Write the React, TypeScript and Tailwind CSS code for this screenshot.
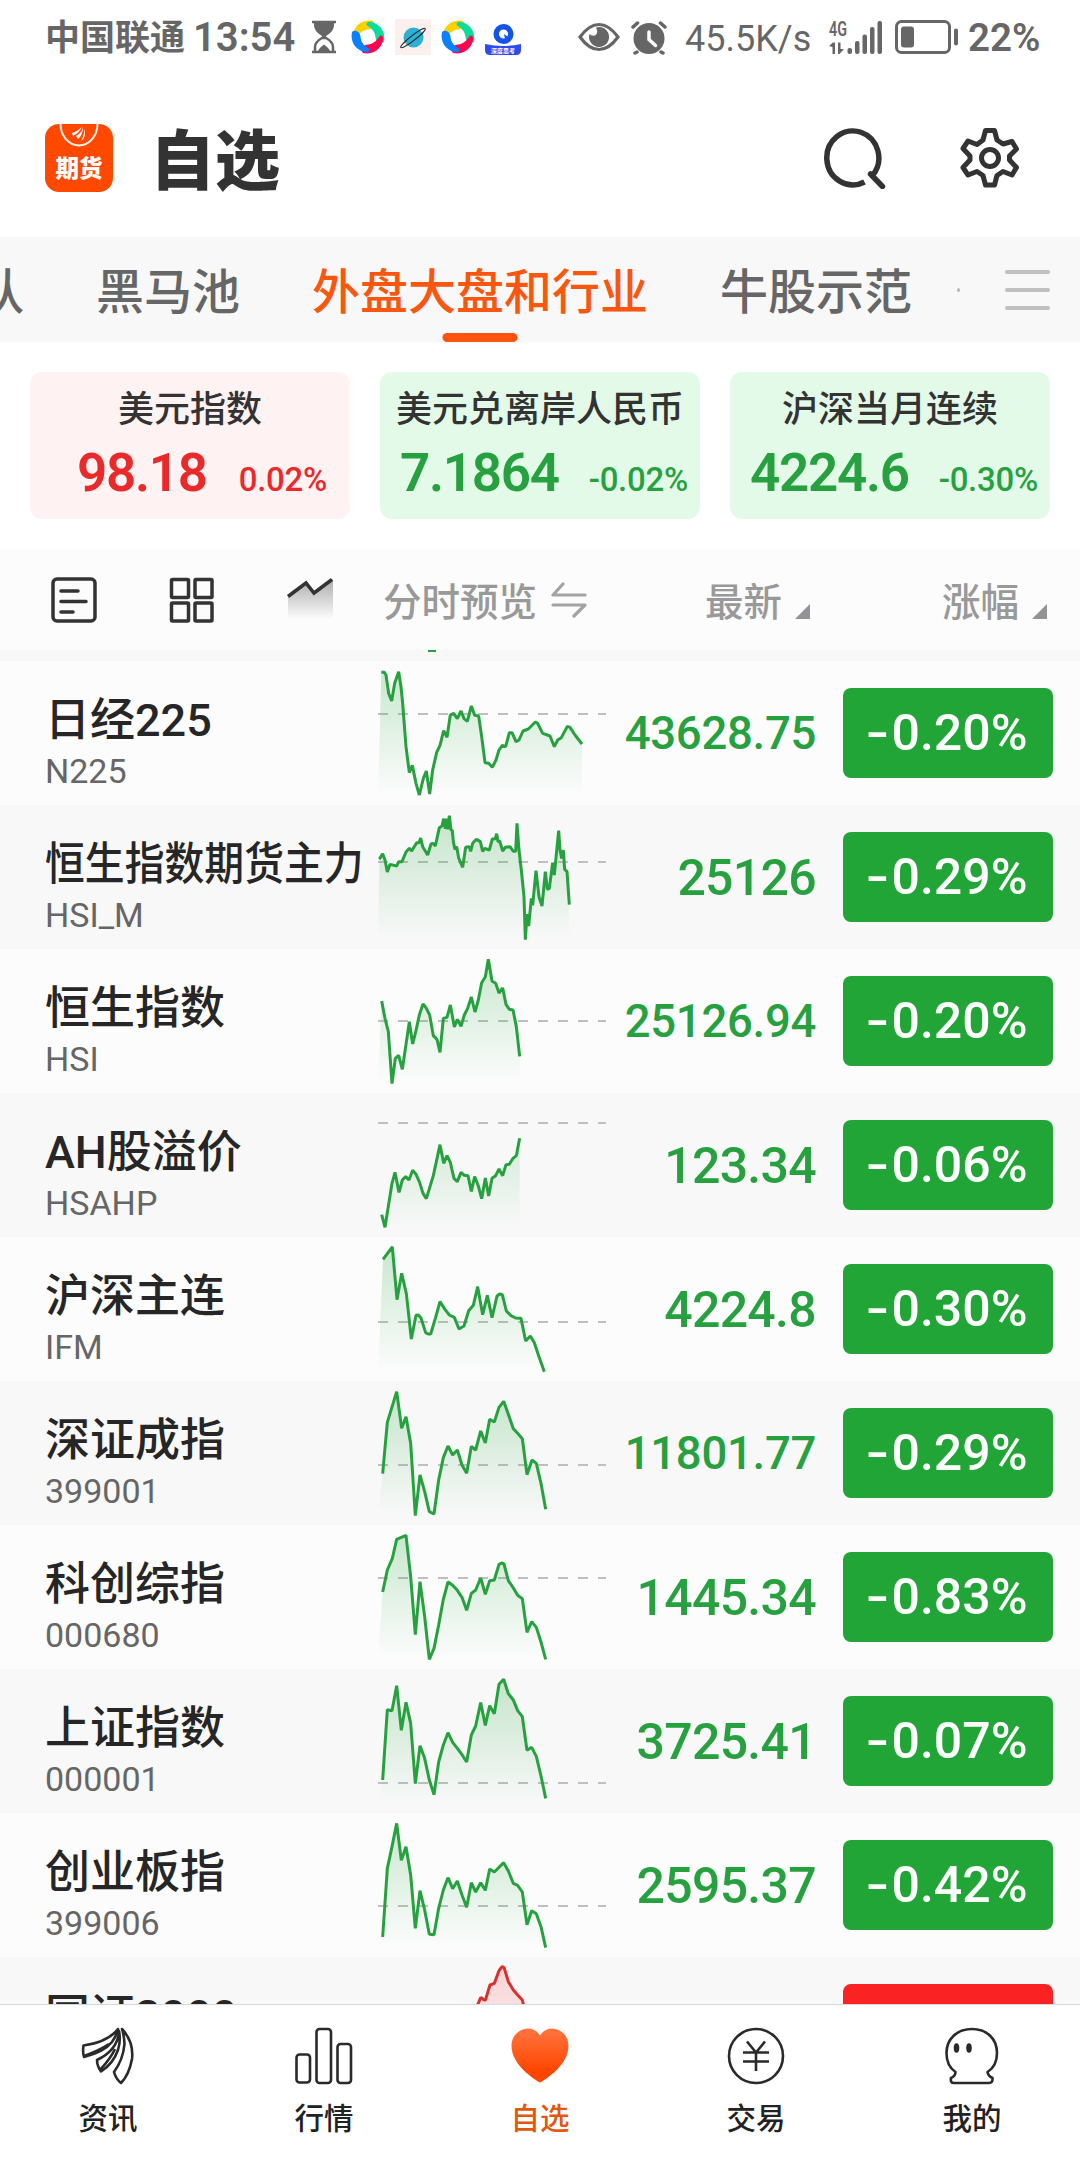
import type { ReactNode } from 'react';
import clsx from 'clsx';

interface Quote {
  name: string;
  code: string;
  price: string;
  change: string;
  base?: number;
  up?: boolean;
  points: string;
}

const CARDS = [
  { name: '美元指数', value: '98.18', pct: '0.02%', up: true },
  { name: '美元兑离岸人民币', value: '7.1864', pct: '-0.02%', up: false },
  { name: '沪深当月连续', value: '4224.6', pct: '-0.30%', up: false },
];

// Sparkline points are in thirds of a pixel, measured from the top of the row
const QUOTES: Quote[] = [
  {
    name: '日经225', code: 'N225', price: '43628.75', change: '-0.20%', base: 159,
    points: '64,34 73,34 78,42 86,97 95,120 104,67 116,32 123,77 128,127 138,257 148,335 157,313 168,367 178,402 190,352 199,330 209,399 218,327 230,274 240,253 251,209 261,229 271,162 281,157 292,173 303,150 312,173 322,181 334,135 344,163 356,165 365,227 375,305 386,307 397,319 408,297 417,267 427,253 437,257 448,215 456,215 468,242 477,237 489,210 505,204 526,183 533,187 548,217 570,225 583,257 593,237 604,230 622,196 630,199 645,222 666,249',
  },
  {
    name: '恒生指数期货主力', code: 'HSI_M', price: '25126', change: '-0.29%', base: 171,
    points: '58,163 68,146 75,165 82,201 90,178 110,183 116,170 126,170 138,141 148,130 155,138 170,113 177,113 182,99 188,125 203,150 213,117 219,115 226,123 238,68 246,63 251,41 256,71 259,41 263,73 268,32 273,75 277,77 280,110 285,133 290,125 296,159 308,187 317,127 328,125 332,139 338,115 349,103 361,110 368,139 374,130 388,135 397,102 406,101 410,86 414,110 419,108 428,138 436,127 450,125 460,139 467,139 471,55 477,135 484,195 492,275 496,404 501,327 506,363 514,280 518,301 528,197 537,275 546,303 556,200 562,253 568,250 578,173 583,210 596,77 600,135 605,160 610,135 614,193 621,200 628,299',
  },
  {
    name: '恒生指数', code: 'HSI', price: '25126.94', change: '-0.20%', base: 216,
    points: '65,156 75,208 85,248 96,404 106,328 116,319 127,361 137,293 148,218 158,285 168,245 178,198 189,165 198,176 209,198 220,260 231,271 240,310 250,208 261,205 271,168 283,234 292,211 303,232 313,198 323,178 334,144 345,189 355,153 365,101 376,83 385,31 396,96 407,103 417,132 428,117 438,166 448,181 459,183 469,233 479,322',
  },
  {
    name: 'AH股溢价', code: 'HSAHP', price: '123.34', change: '-0.06%', base: 90,
    points: '65,365 75,403 96,271 105,238 117,298 127,261 137,251 147,261 158,232 168,244 178,266 189,301 199,317 220,248 240,155 251,211 261,188 271,208 282,256 292,266 303,238 313,247 324,248 334,295 344,251 355,279 365,317 376,255 386,309 396,256 407,248 417,228 428,248 438,215 448,214 459,196 469,188 479,136',
  },
  {
    name: '沪深主连', code: 'IFM', price: '4224.8', change: '-0.30%', base: 255,
    points: '69,67 97,30 111,188 125,109 139,169 154,306 168,235 175,234 183,243 197,287 204,291 212,291 226,244 240,194 255,217 268,234 283,241 297,276 312,267 326,221 340,205 353,149 368,233 382,175 396,242 411,177 419,171 427,173 439,222 453,236 467,243 483,244 497,312 511,297 523,317 537,359 553,404',
  },
  {
    name: '深证成指', code: '399001', price: '11801.77', change: '-0.29%', base: 252,
    points: '68,278 82,124 110,32 125,142 138,107 152,187 166,404 180,282 194,332 208,392 222,399 236,297 250,230 264,195 278,222 292,207 306,252 320,277 334,196 347,207 362,150 376,186 389,115 403,123 417,79 431,61 445,100 460,143 473,157 487,173 501,281 516,237 529,247 543,307 557,385',
  },
  {
    name: '科创综指', code: '000680', price: '1445.34', change: '-0.83%', base: 159,
    points: '68,201 82,135 97,100 110,43 138,31 152,155 166,329 180,170 194,275 208,403 222,370 236,300 250,223 264,171 278,181 292,196 306,217 320,256 334,205 347,195 362,159 376,208 389,167 403,165 417,118 425,114 432,117 445,167 460,189 473,211 487,221 501,322 515,290 529,307 543,351 557,403',
  },
  {
    name: '上证指数', code: '000001', price: '3725.41', change: '-0.07%', base: 342,
    points: '68,333 82,122 96,125 110,50 124,184 138,100 152,163 166,344 180,230 194,268 208,333 222,377 236,279 250,228 264,191 278,220 292,238 306,257 320,279 334,198 347,171 362,101 376,169 389,110 403,134 417,46 431,31 445,74 460,93 473,125 487,143 501,244 515,235 529,262 543,321 557,388',
  },
  {
    name: '创业板指', code: '399006', price: '2595.37', change: '-0.42%', base: 279,
    points: '68,372 82,166 96,101 110,31 124,142 138,101 152,186 166,346 180,233 194,291 208,364 222,365 236,286 250,231 264,194 278,227 292,204 306,246 320,283 334,209 347,237 362,209 376,232 389,168 403,177 431,149 445,174 460,211 473,217 487,237 501,335 515,293 529,302 543,341 557,404',
  },
  {
    name: '国证2000', code: '399303', price: '', change: '', up: true,
    points: '340,170 354,141 362,122 376,130 390,84 403,79 417,41 426,29 432,31 445,74 460,99 473,114 487,129 497,170',
  },
];

function Sparkline({ points, base, up }: Pick<Quote, 'points' | 'base' | 'up'>) {
  const color = up ? '#d8302f' : '#27a13f';
  const lastX = points.split(' ').pop()!.split(',')[0];
  const startX = up ? points.split(',')[0] : '54';
  const fillId = up ? 'fill-up' : 'fill-down';

  return (
    <svg className="block h-36 w-[230px] shrink-0" viewBox="54 0 690 432">
      <defs>
        <linearGradient id={fillId} gradientUnits="userSpaceOnUse" x1="0" y1="30" x2="0" y2="400">
          <stop offset="0" stopColor={up ? '#ff2a2a' : '#22a63a'} stopOpacity={up ? 0.17 : 0.24} />
          <stop offset="1" stopColor={up ? '#ff2a2a' : '#22a63a'} stopOpacity="0" />
        </linearGradient>
      </defs>
      {base && <line x1="54" x2="738" y1={base} y2={base} stroke="#bfbfbf" strokeWidth="6" strokeDasharray="30 30" />}
      <polygon points={`${startX},405 ${points} ${lastX},405`} fill={`url(#${fillId})`} />
      <polyline points={points} fill="none" stroke={color} strokeWidth="9" strokeLinejoin="bevel" />
    </svg>
  );
}

function QuoteRow({ quote, striped }: { quote: Quote; striped: boolean }) {
  const longName = quote.name.length > 7;
  return (
    <div className={clsx('flex h-36 shrink-0', striped ? 'bg-[#f8f8f8]' : 'bg-[#fcfcfc]')}>
      <div className="w-[378px] shrink-0 pt-8 pl-[45px]">
        <p className={clsx('origin-left text-[45px] leading-[56px] font-medium whitespace-nowrap text-[#262626]', longName && 'scale-x-[0.885]')}>
          {quote.name}
        </p>
        <p className="text-[34px] leading-[45px] text-[#666]">{quote.code}</p>
      </div>
      <Sparkline points={quote.points} base={quote.base} up={quote.up} />
      <div className={clsx('-mr-px flex flex-1 items-center justify-end pt-0.5 font-medium text-[#27a13f]', quote.price.length > 7 ? 'text-[45.5px] tracking-[-0.3px]' : 'text-[50px] tracking-[-0.7px]')}>
        {quote.price}
      </div>
      <div className={clsx('mt-[27px] mr-[27px] ml-7 flex h-[90px] w-[210px] items-center justify-center rounded-lg text-[50px] font-medium text-white', quote.up ? 'bg-[#fa2222]' : 'bg-[#21a537]')}>
        {quote.change && <span className="mr-1.5 origin-center scale-x-[1.35]">{quote.change[0]}</span>}
        {quote.change.slice(1)}
      </div>
    </div>
  );
}

const PETAL = 'M3 15C5 5 14 0 23 2C26 5 23 10.500 18 10.500C12 11 9 15 6 19.500C2.500 19.500 2.500 17 3 15Z';

function PinwheelIcon() {
  return (
    <svg className="size-9" viewBox="0 0 36 36">
      <path d={PETAL} fill="#fdd000" />
      <path d={PETAL} transform="rotate(90 18 18)" fill="#0cdc9b" />
      <path d={PETAL} transform="rotate(180 18 18)" fill="#fb0551" />
      <path d={PETAL} transform="rotate(270 18 18)" fill="#0a80fb" />
    </svg>
  );
}

function StatusBar() {
  return (
    <div className="flex h-[74px] shrink-0 items-center pl-[45px] text-[#666]">
      <span className="pt-1 text-[35px] font-bold">中国联通</span>
      <span className="ml-2 w-[107px] pt-0.5 text-[40px] font-semibold">13:54</span>
      <svg className="ml-[11px] h-[34px] w-[26px]" viewBox="0 0 26 34" fill="none" stroke="#666">
        <path d="M1 2H25M1 32H25" strokeWidth="2.500" />
        <path d="M4 31V27Q4 22 11 18H15Q22 22 22 27V31" strokeWidth="2.500" />
        <path d="M3 2H23V6Q22 12 15 16V18H11V16Q4 12 3 6ZM7 31Q8 28 13 24.500Q18 28 19 31Z" fill="#666" stroke="none" />
      </svg>
      <div className="ml-[13px] flex items-center gap-[9px]">
        <PinwheelIcon />
        <svg className="size-9" viewBox="0 0 36 36">
          <rect width="36" height="36" fill="#fbf0ee" />
          <circle cx="18.500" cy="18.500" r="10" fill="#2fafd3" />
          <ellipse cx="18" cy="19" rx="15.500" ry="2.500" transform="rotate(-38 18 19)" fill="none" stroke="#222" strokeWidth="1" />
        </svg>
        <PinwheelIcon />
        <svg className="size-9" viewBox="0 0 36 36">
          <circle cx="18.500" cy="15" r="7.300" fill="none" stroke="#1552e8" strokeWidth="5.500" />
          <path d="M19 15L23 18L20 20Z" fill="#1552e8" />
          <path d="M0 25Q18 29 36 25V31Q36 36 31 36H5Q0 36 0 31Z" fill="#2e4bee" />
          <text x="18" y="34" textAnchor="middle" fontSize="6" fontWeight="700" fill="#fff">深度思考</text>
        </svg>
      </div>

      <svg className="ml-[57px] h-[30px] w-[42px]" viewBox="0 0 42 30" fill="none" stroke="#666">
        <path d="M2 15Q11 2.500 21 2.500T40 15Q31 27.500 21 27.500T2 15Z" strokeWidth="3.200" />
        <path d="M21 5A10 10 0 1 1 11.500 12Q14 14.500 17 13.500Q21 11 18 5.800Q19.500 5 21 5Z" fill="#666" stroke="none" />
      </svg>
      <svg className="ml-[11px] h-9 w-9" viewBox="0 0 36 36" fill="none" stroke="#666" strokeLinecap="round">
        <circle cx="18" cy="19.500" r="15.500" fill="#666" stroke="none" />
        <path d="M2 8L6.500 4M34 8L29.500 4M6 33L4 34M30 33L32 34" strokeWidth="3.500" />
        <path d="M18 13V20.500L24.500 26.500" stroke="#fff" strokeWidth="3.500" />
      </svg>
      <span className="ml-[18px] w-[124px] pt-1 text-[36px]">45.5K/s</span>
      <svg className="ml-5 h-[36px] w-[54px]" viewBox="0 0 54 36" fill="#666">
        <text x="0" y="16.500" fontSize="20" fontWeight="600" textLength="18" lengthAdjust="spacingAndGlyphs">4G</text>
        <path d="M0 27L4 23.500H6V35H3.500V28ZM9 23.500H11.500V30H15L10.500 35H9Z" />
        <rect x="18.500" y="29" width="4.500" height="6" rx="2" />
        <rect x="26" y="22" width="4.500" height="13" rx="2" />
        <rect x="33.500" y="15.500" width="4.500" height="19.500" rx="2" />
        <rect x="41" y="8" width="4.500" height="27" rx="2" />
        <rect x="48.500" y="2" width="4.500" height="33" rx="2" />
      </svg>
      <svg className="ml-3 h-[34px] w-[64px]" viewBox="0 0 64 34" fill="#666">
        <rect x="1.500" y="1.500" width="53" height="31" rx="5" fill="none" stroke="#666" strokeWidth="3" />
        <rect x="6" y="6.500" width="13" height="21" rx="3" />
        <rect x="59" y="8.500" width="4" height="17" rx="2" />
      </svg>
      <span className="ml-[9px] pt-0.5 text-[38.5px] font-semibold">22%</span>
    </div>
  );
}

function Header() {
  return (
    <header className="flex h-[163px] shrink-0 items-center pt-[5px] pl-[45px]">
      <svg className="size-[68px] shrink-0" viewBox="0 0 68 68">
        <rect width="68" height="68" rx="14" fill="#ff4800" />
        <path d="M15.500 0A18.500 21.500 0 0 0 52.500 0" fill="none" stroke="#fff3e8" strokeWidth="2" />
        <path d="M37 3Q33 7 27 9L28 12Q34 9 37 3ZM38 3Q37 9 31 12L33 15Q38 11 38 3ZM39 4Q40 10 36 17Q42 13 39 4Z" fill="#fff" />
        <text x="34" y="53" textAnchor="middle" fontSize="23.500" fontWeight="800" fill="#fff">期货</text>
      </svg>
      <h1 className="ml-[37px] pt-2 text-[65px] leading-none font-black text-[#333]">自选</h1>
      <svg className="ml-[544px] h-[62px] w-[62px] shrink-0" viewBox="0 0 62 62" fill="none" stroke="#333" strokeWidth="5.500">
        <path d="M40.500 55A26 27 0 1 1 48.500 48.500" />
        <path d="M46.500 47L58.500 59.500" strokeLinecap="round" />
      </svg>
      <svg className="ml-[73px] h-[62px] w-[62px] shrink-0" viewBox="959 128 62 62" fill="none" stroke="#333" strokeWidth="5" strokeLinejoin="round">
        <path d="M985.500 131.500H994.500L997 141L1003 145L1012 142.500L1016.500 150L1009.500 157V161L1016.500 168.500L1012 176L1003 172.500L997 176.500L994.500 186H985.500L983 176.500L977 172.500L968 176L963 168.500L970 161V157L963 149.500L968 142L977 145.500L983 141Z" />
        <circle cx="990" cy="159" r="8.500" />
      </svg>
    </header>
  );
}

function TabStrip() {
  return (
    <div className="flex h-[105px] shrink-0 items-center justify-between bg-[#f8f8f8] pr-[30px]">
      <div className="flex h-full w-[960px] items-center gap-[72px] overflow-hidden text-[48px] font-medium whitespace-nowrap text-[#666]">
        <span className="-ml-6 pt-[7px]">队</span>
        <span className="pt-[7px]">黑马池</span>
        <span className="relative flex h-full items-center pt-[7px] text-[#f9560f]">
          外盘大盘和行业
          <i className="absolute bottom-0 left-1/2 h-[9px] w-[75px] -translate-x-1/2 rounded-full bg-[#fc5410]" />
        </span>
        <span className="pt-[7px]">牛股示范</span>
        <i className="-ml-[27px] size-1 rounded-full bg-[#bbb]" />
      </div>
      <div className="flex w-[45px] flex-col gap-3.5">
        <i className="h-1 rounded-full bg-[#c0c0c0]" />
        <i className="h-1 rounded-full bg-[#c0c0c0]" />
        <i className="h-1 rounded-full bg-[#c0c0c0]" />
      </div>
    </div>
  );
}

function ListHeader() {
  return (
    <div className="flex h-[101px] shrink-0 items-center bg-[#fcfcfc] pl-[51px] text-[38.5px] text-[#999]">
      <svg className="h-[46px] w-[46px]" viewBox="0 0 46 46" fill="none" stroke="#333" strokeWidth="3.500" strokeLinecap="round">
        <rect x="2" y="2" width="42" height="42" rx="4" />
        <path d="M10 14H27M10 24.500H35M10 35H22" />
      </svg>
      <svg className="ml-[72px] h-[46px] w-[46px]" viewBox="0 0 46 46" fill="none" stroke="#333" strokeWidth="3.500">
        <rect x="2.500" y="2.500" width="17" height="18" rx="1" />
        <rect x="26" y="2.500" width="17" height="18" rx="1" />
        <rect x="2.500" y="26" width="17" height="18" rx="1" />
        <rect x="26" y="26" width="17" height="18" rx="1" />
      </svg>
      <svg className="ml-[71px] h-[46px] w-[48px]" viewBox="0 0 48 46">
        <defs>
          <linearGradient id="trend" x1="0" y1="0" x2="0" y2="1">
            <stop offset="0" stopColor="#333" stopOpacity="0.4" />
            <stop offset="1" stopColor="#333" stopOpacity="0" />
          </linearGradient>
        </defs>
        <path d="M2 20L20 6L28 17L47 2V42H2Z" fill="url(#trend)" />
        <path d="M2 19.500L20 6L28 16L46 2.500" fill="none" stroke="#333" strokeWidth="3.500" />
      </svg>
      <span className="ml-[49px] w-[154px] pt-1.5 font-medium whitespace-nowrap">分时预览</span>
      <svg className="ml-[14px] h-[36px] w-[36px]" viewBox="0 0 36 36" fill="none" stroke="#a3a3a3" strokeWidth="3.200" strokeLinecap="round" strokeLinejoin="round">
        <path d="M12 2L2 13H34M2 23H34L23 34" />
      </svg>
      <span className="ml-[118px] w-[77px] pt-1.5 font-medium">最新</span>
      <i className="mt-[24px] ml-[13px] size-[15px] bg-[#929297] [clip-path:polygon(100%_0,100%_100%,0_100%)]" />
      <span className="ml-[132px] w-[77px] pt-1.5 font-medium">涨幅</span>
      <i className="mt-[24px] ml-[13px] size-[15px] bg-[#929297] [clip-path:polygon(100%_0,100%_100%,0_100%)]" />
    </div>
  );
}

function NavItem({ label, active, children }: { label: string; active?: boolean; children: ReactNode }) {
  return (
    <div className="flex w-[216px] flex-col items-center pt-[19px]">
      <svg className="size-[64px]" viewBox="0 0 64 64" fill="none" stroke="#2a2a2a" strokeWidth="2.600" strokeLinejoin="round">
        {children}
      </svg>
      <span className={clsx('mt-[9px] text-[29.5px] leading-[44px] font-medium', active ? 'text-[#e0590f]' : 'text-[#222]')}>{label}</span>
    </div>
  );
}

function BottomNav() {
  return (
    <nav className="flex h-[156px] shrink-0 border-t border-[#d8d8d8] bg-white">
      <NavItem label="资讯">
        <path d="M42 5Q32 18 7.500 21.500Q6.500 28 8 33Q28 28 36 18Q41 11 42 5Z" />
        <path d="M43 7Q42 26 21 36Q21 42 25 47.500Q37 40 42 26Q45 16 43 7Z" />
        <path d="M46 5Q58 18 56 35Q53 51 45 59Q40 55 38 48Q47 36 48.500 20Q48 11 46 5Z" />
        <path d="M8 32Q24 26 33 20M24 46Q35 34 39 25" />
      </NavItem>
      <NavItem label="行情">
        <rect x="4.500" y="30.500" width="13.500" height="28" rx="3" />
        <rect x="24.500" y="5" width="14.500" height="54" rx="3" />
        <rect x="45.500" y="20" width="13.500" height="39" rx="3" />
      </NavItem>
      <NavItem label="自选" active>
        <defs>
          <linearGradient id="heart" x1="0" y1="0" x2="0" y2="1">
            <stop offset="0" stopColor="#ff7540" />
            <stop offset="0.800" stopColor="#ff4500" />
          </linearGradient>
        </defs>
        <path d="M32 58.500C27 56 3.500 41 3.500 22C3.500 12 11 4.500 20 4.500Q27.500 4.500 32 11.500Q36.500 4.500 44 4.500C53 4.500 60.500 12 60.500 22C60.500 41 37 56 32 58.500Z" fill="url(#heart)" stroke="none" />
      </NavItem>
      <NavItem label="交易">
        <circle cx="32" cy="32" r="27" />
        <path d="M23 17.500L32 28.500L41 17.500M32 28V47M19 28.500H45M19 37.500H45" />
      </NavItem>
      <NavItem label="我的">
        <path d="M15.500 48Q6.500 42 6.500 29C6.500 15 17 5 32 5S57 15 57 29Q57 42 47.500 48Q48 52 52.500 54Q53 59 49 59H14Q10 59 11 54Q15.500 52 15.500 48Z" />
        <ellipse cx="16.500" cy="24" rx="2.800" ry="4.800" fill="#2a2a2a" stroke="none" />
        <ellipse cx="29" cy="24" rx="2.800" ry="4.800" fill="#2a2a2a" stroke="none" />
      </NavItem>
    </nav>
  );
}

export default function App() {
  return (
    <div className="flex h-[2160px] w-[1080px] flex-col overflow-hidden bg-white font-['Roboto','Noto_Sans_CJK_SC',sans-serif]">
      <StatusBar />
      <Header />
      <TabStrip />

      {/* Pinned indices */}
      <section className="grid h-[207px] shrink-0 grid-cols-3 gap-[30px] px-[30px] pt-[30px] pb-[30px]">
        {CARDS.map(card => (
          <div key={card.name} className={clsx('h-[147px] rounded-xl pt-[11px] text-center', card.up ? 'bg-[#fff2f2] text-[#ea2a2a]' : 'bg-[#e3fae8] text-[#27a13f]')}>
            <p className="text-[36px] leading-[54px] font-medium whitespace-nowrap text-[#333]">{card.name}</p>
            <p className={clsx('flex items-baseline justify-center leading-[73px] whitespace-nowrap', card.up ? 'gap-8 pl-6' : 'gap-[30px] pl-2')}>
              <span className="text-[53px] font-semibold tracking-[-1.3px]">{card.value}</span>
              <span className="text-[33px] font-medium tracking-[-0.3px]">{card.pct}</span>
            </p>
          </div>
        ))}
      </section>

      <ListHeader />

      {/* Quote list, scrolled so that the first and last rows are cut off */}
      <main className="flex flex-1 flex-col overflow-hidden">
        <div className="h-[11px] shrink-0 bg-[#f8f8f8] pl-[428px]">
          <i className="block h-0.5 w-2 bg-[#27a13f]" />
        </div>
        {QUOTES.map((quote, i) => (
          <QuoteRow key={quote.code} quote={quote} striped={i % 2 === 1} />
        ))}
      </main>

      <BottomNav />
    </div>
  );
}
